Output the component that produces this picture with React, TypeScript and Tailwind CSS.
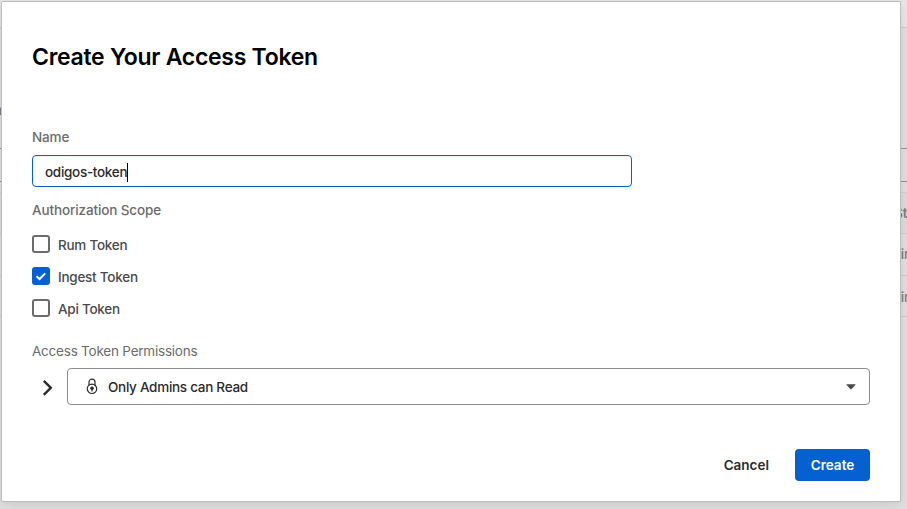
import { useState } from "react";

const scopes = [
  { label: "Rum Token", checked: false },
  { label: "Ingest Token", checked: true },
  { label: "Api Token", checked: false },
];

// Table page that stays visible around the edges of the dialog.
function PageBehind() {
  return (
    <div className="flex h-full flex-col bg-[#e0e0e0] text-[13.5px] font-semibold text-[#7c7c7c]">
      <div className="h-7 shrink-0 border-b border-[#cacaca] bg-[#e6e6e6]" />
      <div className="flex h-[121px] shrink-0 items-end border-b border-[#929292] pb-[28px]">
        <span className="ml-[-6px]">n</span>
      </div>
      <div className="h-[33px] shrink-0 border-b border-[#929292]" />
      <div className="h-[11px] shrink-0 border-b border-[#d0d0d0]" />
      <div className="flex h-[41px] shrink-0 items-center border-b border-[#cfcfcf] bg-[#dcdcdc] pl-[894px]">St</div>
      <div className="flex h-[42px] shrink-0 items-center border-b border-[#cacaca] pl-[893px] font-medium">Lin</div>
      <div className="flex h-[41px] shrink-0 items-center border-b border-[#cacaca] pt-[2px] pl-[893px] font-medium">Lin</div>
    </div>
  );
}

function Checkbox({ checked }: { checked: boolean }) {
  if (!checked) return <span className="size-[18px] rounded-[3px] border-2 border-[#6b6b6b] bg-white" />;
  return (
    <span className="flex size-[18px] items-center justify-center rounded-[3px] bg-[#0560d2]">
      <svg width="18" height="18" viewBox="0 0 18 18" fill="none" stroke="white" strokeWidth="2">
        <path d="M4.5 9.2 7.6 12 13.2 6.4" />
      </svg>
    </span>
  );
}

export default function App() {
  const [name] = useState("odigos-token");
  return (
    <div className="relative h-[509px] w-[907px] overflow-hidden whitespace-nowrap font-['Inter',sans-serif]">
      <PageBehind />
      <section className="absolute top-[2px] left-[2px] flex h-[499px] w-[898px] flex-col rounded-[1px] bg-white px-[30px] shadow-[0_0_0_1px_#bcbcbc,0_3px_12px_rgba(0,0,0,0.12)]">
        <h1 className="mt-[39px] h-8 text-[23px] leading-8 font-semibold tracking-[-0.28px] text-black">
          Create Your Access Token
        </h1>
        <label className="mt-[54px] h-5 text-[13.5px] leading-5 font-medium tracking-[-0.15px] text-[#6b6b6b]">
          Name
        </label>
        <div className="mt-[8px] flex h-8 w-[600px] shrink-0 items-center rounded-[4px] border border-[#0560d2] pt-[2px] pl-[12px] text-[13.5px] font-medium tracking-[-0.3px] text-[#2b2b2b] shadow-[inset_0_1px_2px_rgba(0,0,0,0.06)]">
          <span>{name}</span>
          <span className="h-[19px] w-px bg-black" />
        </div>
        <div className="mt-[13px] h-5 text-[13.5px] leading-5 font-medium tracking-[-0.12px] text-[#6b6b6b]">
          Authorization Scope
        </div>
        <div className="mt-[15px] flex flex-col gap-[14px]">
          {scopes.map((s) => (
            <div key={s.label} className="flex h-[18px] items-center gap-2 text-[13.5px] font-medium tracking-[-0.25px] text-[#4a4a4a]">
              <Checkbox checked={s.checked} />
              <span className="pt-[2px]">{s.label}</span>
            </div>
          ))}
        </div>
        <div className="mt-[24px] h-5 text-[13.5px] leading-5 tracking-[-0.22px] text-[#6b6b6b]">
          Access Token Permissions
        </div>
        <div className="mt-[7px] flex h-[37px] shrink-0 items-center">
          <svg className="shrink-0" width="35" height="37" viewBox="0 0 35 37" fill="none" stroke="#2b2b2b" strokeWidth="2.4">
            <path d="m11.8 12.8 7 7-7 7" />
          </svg>
          <div className="flex h-[37px] grow items-center rounded-[4px] border border-[#8c8c8c] pr-[13px] pl-[18px]">
            <svg width="13" height="18" viewBox="0 0 13 18" fill="none" stroke="#2b2b2b" strokeWidth="1.2">
              <circle cx="6" cy="10.8" r="4.7" />
              <path d="M3 7.4V4.2a3 3 0 0 1 6 0v3.2" />
              <circle cx="6" cy="10.2" r="1.8" fill="#2b2b2b" stroke="none" />
              <path d="M6 10.6v3" />
            </svg>
            <span className="ml-[9px] grow pt-[2px] text-[13.5px] font-medium tracking-[-0.28px] text-[#2b2b2b]">Only Admins can Read</span>
            <svg width="10" height="6" viewBox="0 0 10 6" fill="#4a4a4a">
              <path d="M.8.3h8.4q.8 0 .2.7L5.4 5.3q-.4.4-.8 0L.6 1Q0 .3.8.3Z" />
            </svg>
          </div>
        </div>
        <div className="mt-[44px] flex h-8 items-center justify-end gap-[26px] text-[13.5px] font-semibold">
          <button className="text-[#2b2b2b]">Cancel</button>
          <button className="h-8 w-[75px] rounded-[4px] bg-[#0560d2] text-white">Create</button>
        </div>
      </section>
    </div>
  );
}
